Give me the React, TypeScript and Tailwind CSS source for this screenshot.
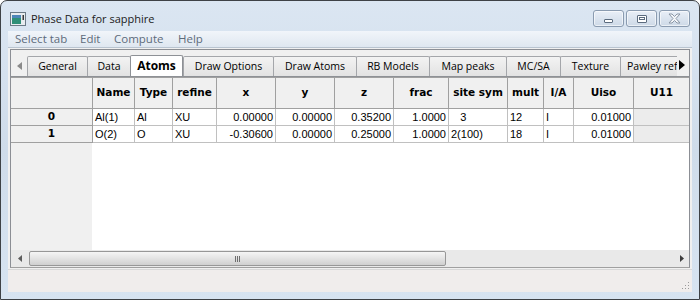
import React from "react";

const tabs = [
    { label: "General", w: 61 },
    { label: "Data", w: 44 },
    { label: "Atoms", w: 53, active: true },
    { label: "Draw Options", w: 91 },
    { label: "Draw Atoms", w: 84 },
    { label: "RB Models", w: 74 },
    { label: "Map peaks", w: 78 },
    { label: "MC/SA", w: 55 },
    { label: "Texture", w: 61 },
    { label: "Pawley ref", w: 70 },
];

type Col = { h: string; w: number; right?: boolean; ro?: boolean };

const cols: Col[] = [
    { h: "Name", w: 42 },
    { h: "Type", w: 38 },
    { h: "refine", w: 44 },
    { h: "x", w: 59, right: true },
    { h: "y", w: 59, right: true },
    { h: "z", w: 59, right: true },
    { h: "frac", w: 55, right: true },
    { h: "site sym", w: 59 },
    { h: "mult", w: 36 },
    { h: "I/A", w: 30 },
    { h: "Uiso", w: 60, right: true },
    { h: "U11", w: 56, ro: true },
];

const rows = [
    ["Al(1)", "Al", "XU", "0.00000", "0.00000", "0.35200", "1.0000", "\u00a0\u00a0 3", "12", "I", "0.01000", ""],
    ["O(2)", "O", "XU", "-0.30600", "0.00000", "0.25000", "1.0000", "2(100)", "18", "I", "0.01000", ""],
];

const ui = { fontFamily: '"Open Sans", "Noto Sans", sans-serif' };
const gridFont = { fontFamily: '"Liberation Sans", Arial, sans-serif' };
const headFont = { fontFamily: '"DejaVu Sans", Verdana, sans-serif' };

function CaptionButton({ kind }: { kind: "min" | "max" | "close" }) {
    return (
        <div className="w-[31px] h-[17px] mr-[2px] rounded-[3px] border border-[#8a9bb0] bg-gradient-to-b from-[#e9eff7] to-[#cdd9e7] flex items-center justify-center shadow-[inset_0_0_0_1px_rgba(255,255,255,0.6)]">
            {kind === "min" && <div className="w-[9px] h-[4px] mt-[5px] border border-[#5b6b7e] bg-white rounded-[1px]" />}
            {kind === "max" && (
                <div className="w-[10px] h-[8px] border border-[#5b6b7e] bg-white rounded-[1px] flex items-center justify-center">
                    <div className="w-[6px] h-[3px] border border-[#5b6b7e]" />
                </div>
            )}
            {kind === "close" && (
                <svg width="13" height="11" viewBox="0 0 13 11">
                    <path d="M1 1h3l2.5 2.5L9 1h3L8 5.5 12 10H9L6.5 7.5 4 10H1l4-4.5z" fill="#f4f6f9" stroke="#8b97a6" strokeWidth="1" />
                </svg>
            )}
        </div>
    );
}

export default function App() {
    return (
        <div className="w-[700px] h-[300px] overflow-hidden bg-white">
            <div className="w-[700px] h-[300px] flex flex-col border border-[#3e4246] rounded-t-[7px] bg-gradient-to-b from-[#dbe6f2] via-[#cfdcea] to-[#d7e4f1]">
                {/* title bar */}
                <div className="h-[30px] flex items-start shrink-0">
                    <svg width="16" height="14" viewBox="0 0 16 14" className="ml-[9px] mt-[11px]">
                        <rect x="0.5" y="0.5" width="15" height="13" fill="#e8ecef" stroke="#6b7a86" />
                        <rect x="2" y="3" width="9" height="9" fill="#2f8f77" />
                        <rect x="2" y="3" width="9" height="3" fill="#4c86b8" />
                        <rect x="12.5" y="3" width="1.5" height="5" fill="#3a3a3a" />
                    </svg>
                    <span className="ml-[5px] mt-[10px] text-[11px] text-[#1b1b1b] leading-[15px]" style={ui}>Phase Data for sapphire</span>
                    <div className="ml-auto flex items-center mr-[7px] mt-[9px]">
                        <CaptionButton kind="min" />
                        <CaptionButton kind="max" />
                        <CaptionButton kind="close" />
                    </div>
                </div>

                {/* client */}
                <div className="flex-1 mx-[7px] mb-[7px] flex flex-col bg-[#f0f0f0] min-h-0">
                    {/* menu */}
                    <div className="h-[17px] shrink-0 flex items-center bg-gradient-to-b from-[#f1f5fa] to-[#dfe7f0] border-b border-[#b9c4d0] text-[11.5px] text-[#5d6b7b]" style={ui}>
                        <span className="ml-[7px] w-[65px]">Select tab</span>
                        <span className="w-[34px]">Edit</span>
                        <span className="w-[64px]">Compute</span>
                        <span>Help</span>
                    </div>

                    {/* notebook */}
                    <div className="flex-1 mt-[1px] mx-[2px] flex flex-col border border-[#8c8f95] border-b-[#a0a0a0] min-h-0">
                        {/* tab row */}
                        <div className="h-[27px] shrink-0 flex items-end border-b border-[#8e9196] relative">
                            <div className="w-[16px] h-[20px] flex items-center justify-center">
                                <svg width="6" height="8" viewBox="0 0 6 8" className="ml-[2px]">
                                    <path d="M5 0L0 4L5 8z" fill="#8a8a8a" />
                                </svg>
                            </div>
                            <div className="flex items-end w-[650px] overflow-hidden text-[10.5px]" style={ui}>
                                {tabs.map((t, i) =>
                                    t.active ? (
                                        <div key={i} style={{ width: t.w }} className="h-[22px] -mb-px shrink-0 bg-white border border-[#8e9196] border-b-white rounded-t-[2px] flex items-center justify-center font-bold text-black text-[12px] relative z-10">
                                            {t.label}
                                        </div>
                                    ) : (
                                        <div key={i} style={{ width: t.w }} className="h-[20px] shrink-0 -mr-px bg-gradient-to-b from-[#f3f3f3] to-[#e2e2e2] border border-b-0 border-[#a4a6aa] rounded-t-[2px] flex items-center justify-center text-black whitespace-nowrap overflow-hidden">
                                            <span className={i === tabs.length - 1 ? "w-full pl-[6px] text-left" : ""}>{t.label}</span>
                                        </div>
                                    )
                                )}
                            </div>
                            <div className="flex-1 h-[22px] flex items-center bg-[#f0f0f0]">
                                <svg width="6" height="10" viewBox="0 0 6 10" className="ml-[2px]">
                                    <path d="M0 0L6 5L0 10z" fill="#000" />
                                </svg>
                            </div>
                        </div>

                        {/* grid */}
                        <div className="flex-1 flex flex-col bg-white min-h-0 overflow-hidden">
                            <div className="flex h-[32px] shrink-0 border-t border-[#a0a0a0]">
                                <div className="w-[82px] shrink-0 bg-[#f0f0f0] border-r border-b border-[#a0a0a0]" />
                                {cols.map((c, i) => (
                                    <div key={i} style={{ width: c.w, ...headFont }} className="shrink-0 bg-[#f0f0f0] border-r border-b border-[#a0a0a0] flex items-center justify-center text-[10.5px] font-bold text-black whitespace-nowrap">
                                        {c.h}
                                    </div>
                                ))}
                            </div>
                            {rows.map((r, ri) => (
                                <div key={ri} className="flex h-[17px] shrink-0">
                                    <div className="w-[82px] shrink-0 bg-[#f0f0f0] border-r border-b border-[#a0a0a0] flex items-center justify-center text-[10.5px] font-bold text-black" style={headFont}>
                                        {ri}
                                    </div>
                                    {cols.map((c, ci) => (
                                        <div
                                            key={ci}
                                            style={{ width: c.w, ...gridFont }}
                                            className={
                                                "shrink-0 border-r border-b border-[#c0c0c0] flex items-center text-[11px] text-black whitespace-nowrap overflow-hidden " +
                                                (c.right ? "justify-end pr-[2px] " : "justify-start pl-[2px] ") +
                                                (c.ro ? "bg-[#ececec]" : "bg-white")
                                            }
                                        >
                                            {r[ci]}
                                        </div>
                                    ))}
                                </div>
                            ))}
                            <div className="flex-1 flex">
                                <div className="w-[81px] bg-[#f0f0f0]" />
                                <div className="flex-1 bg-white" />
                            </div>
                        </div>

                        {/* horizontal scrollbar */}
                        <div className="h-[17px] shrink-0 flex items-center bg-[#e9e9e9]">
                            <div className="w-[18px] h-[17px] flex items-center justify-center">
                                <svg width="4" height="7" viewBox="0 0 4 7">
                                    <path d="M4 0L0 3.5L4 7z" fill="#5c5c5c" />
                                </svg>
                            </div>
                            <div className="w-[417px] h-[15px] rounded-[2px] border border-[#979797] bg-gradient-to-b from-[#f5f5f5] via-[#e3e3e3] to-[#cfcfcf] flex items-center justify-center">
                                <div className="flex gap-[1px]">
                                    <div className="w-[1px] h-[6px] bg-[#6f6f6f]" />
                                    <div className="w-[1px] h-[6px] bg-[#6f6f6f]" />
                                    <div className="w-[1px] h-[6px] bg-[#6f6f6f]" />
                                </div>
                            </div>
                            <div className="flex-1" />
                            <div className="w-[14px] h-[17px] flex items-center justify-center">
                                <svg width="4" height="7" viewBox="0 0 4 7">
                                    <path d="M0 0L4 3.5L0 7z" fill="#3c3c3c" />
                                </svg>
                            </div>
                        </div>
                    </div>

                    {/* status bar */}
                    <div className="h-[23px] shrink-0 mt-[1px] border-t border-[#d8d8d8] bg-[#f0edec] relative">
                        <svg width="10" height="10" viewBox="0 0 10 10" className="absolute right-[2px] bottom-[2px]">
                            <rect x="8" y="2" width="1" height="1" fill="#9a9a9a" />
                            <rect x="5" y="5" width="1" height="1" fill="#9a9a9a" />
                            <rect x="8" y="5" width="1" height="1" fill="#9a9a9a" />
                            <rect x="2" y="8" width="1" height="1" fill="#9a9a9a" />
                            <rect x="5" y="8" width="1" height="1" fill="#9a9a9a" />
                            <rect x="8" y="8" width="1" height="1" fill="#9a9a9a" />
                        </svg>
                    </div>
                </div>
            </div>
        </div>
    );
}
